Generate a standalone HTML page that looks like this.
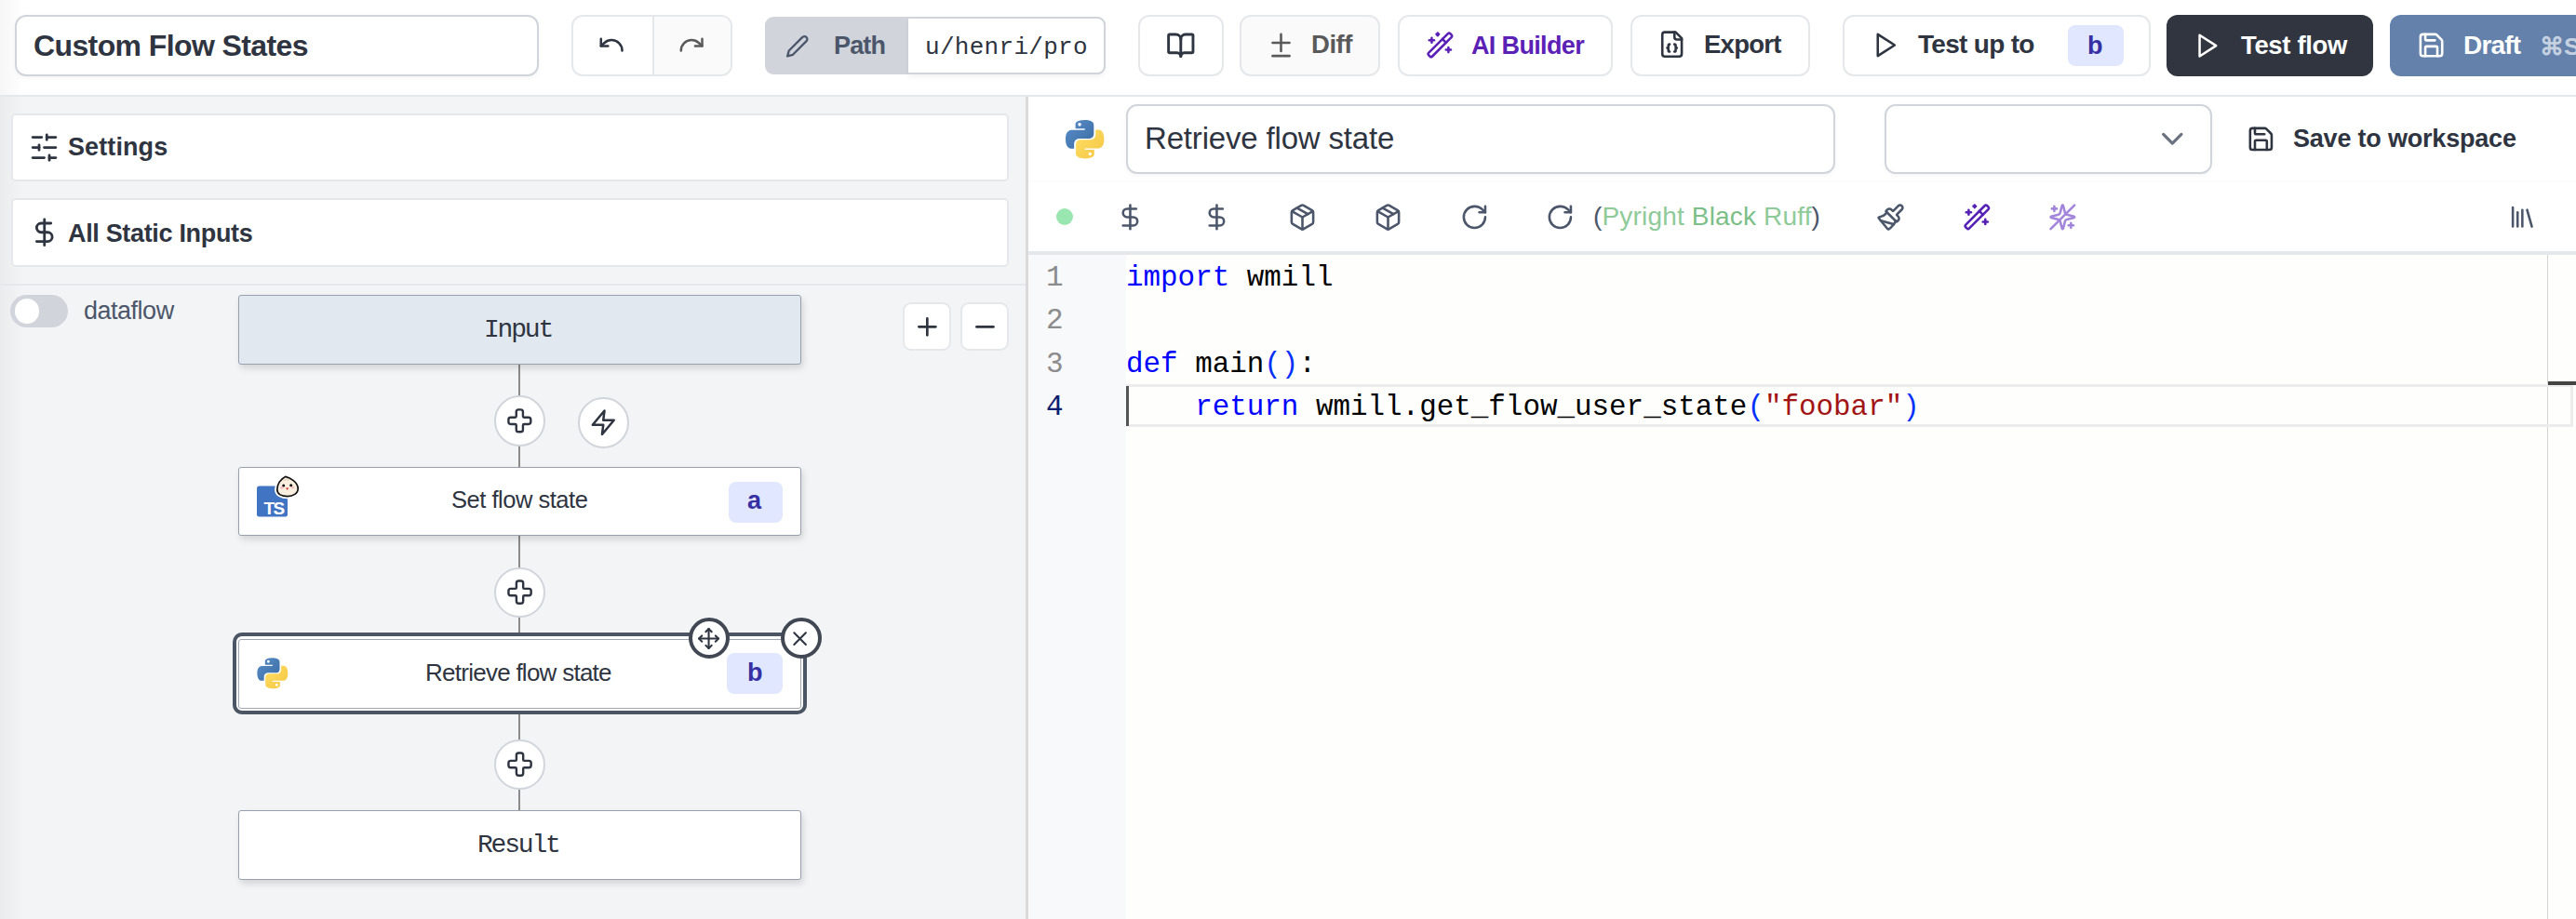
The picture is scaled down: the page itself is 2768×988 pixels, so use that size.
<!DOCTYPE html>
<html><head><meta charset="utf-8">
<style>
*{box-sizing:border-box;margin:0;padding:0}
html,body{width:2768px;height:988px;overflow:hidden;background:#fff;font-family:"Liberation Sans",sans-serif;color:#2e3440}
.a{position:absolute}
.t{position:absolute;white-space:nowrap;line-height:0}
.b{font-weight:bold}
.mono{font-family:"Liberation Mono",monospace}
svg.i{position:absolute;fill:none;stroke:currentColor;stroke-linecap:round;stroke-linejoin:round}
.btn{position:absolute;border:2px solid #e5e7eb;border-radius:12px;background:#fff}
</style></head><body>

<!-- ============ TOP BAR ============ -->
<div class="a" style="left:0;top:0;width:2768px;height:102px;background:#fff"></div>
<div class="a" style="left:0;top:0;width:26px;height:988px;background:linear-gradient(90deg,rgba(0,0,0,0.035),rgba(0,0,0,0))"></div>

<!-- title input -->
<div class="a" style="left:16px;top:16px;width:563px;height:66px;border:2px solid #d1d5db;border-radius:12px;background:#fff;box-shadow:0 2px 4px rgba(0,0,0,0.04)"></div>
<div class="t b" style="left:36px;top:49.20px;font-size:32px;letter-spacing:-0.61px">Custom Flow States</div>

<!-- undo/redo -->
<div class="btn" style="left:614px;top:16px;width:173px;height:66px;overflow:hidden">
  <div class="a" style="left:87px;top:0;width:86px;height:66px;background:#fafafa"></div>
  <div class="a" style="left:85px;top:0;width:2px;height:66px;background:#e5e7eb"></div>
</div>

<!-- path group -->
<div class="a" style="left:822px;top:18px;width:366px;height:62px;border-radius:9px;background:#d1d5db"></div>
<div class="a" style="left:976px;top:18px;width:212px;height:62px;border:2px solid #d1d5db;border-left:0;border-radius:0 9px 9px 0;background:#fff;box-shadow:0 3px 5px rgba(0,0,0,0.05)"></div>
<div class="t b" style="left:896px;top:48.84px;font-size:27px;color:#4c566a;letter-spacing:-0.84px">Path</div>
<div class="t mono" style="left:994px;top:51px;font-size:26px;color:#2e3440;letter-spacing:0.3px">u/henri/pro</div>

<!-- book -->
<div class="btn" style="left:1223px;top:16px;width:92px;height:66px"></div>
<!-- diff -->
<div class="btn" style="left:1332px;top:16px;width:151px;height:66px;background:#fafafa"></div>
<div class="t b" style="left:1409px;top:48.06px;font-size:27.5px;color:#5a5a5a;letter-spacing:-0.46px">Diff</div>
<!-- AI builder -->
<div class="btn" style="left:1502px;top:16px;width:231px;height:66px"></div>
<div class="t b" style="left:1581px;top:48.64px;font-size:27px;color:#5b21b6;letter-spacing:-0.65px">AI Builder</div>
<!-- export -->
<div class="btn" style="left:1752px;top:16px;width:193px;height:66px"></div>
<div class="t b" style="left:1831px;top:48.46px;font-size:27.5px;color:#2e3440;letter-spacing:-0.74px">Export</div>
<!-- test up to -->
<div class="btn" style="left:1980px;top:16px;width:331px;height:66px"></div>
<div class="t b" style="left:2061px;top:48.29px;font-size:28px;color:#2e3440;letter-spacing:-0.69px">Test up to</div>
<div class="a" style="left:2222px;top:27px;width:60px;height:44px;border-radius:8px;background:#e0e7ff"></div>
<div class="t b" style="left:2243px;top:49px;font-size:27px;color:#3730a3">b</div>
<!-- test flow -->
<div class="a" style="left:2328px;top:16px;width:222px;height:66px;border-radius:12px;background:#30353f"></div>
<div class="t b" style="left:2408px;top:49.46px;font-size:27.5px;color:#fff;letter-spacing:-0.35px">Test flow</div>
<!-- draft -->
<div class="a" style="left:2568px;top:16px;width:240px;height:66px;border-radius:12px;background:#6381aa"></div>
<div class="t b" style="left:2647px;top:49.49px;font-size:28px;color:#fff;letter-spacing:-0.84px">Draft</div>
<div class="t b" style="left:2729px;top:49.5px;font-size:26px;color:#c5d0e0">&#8984;S</div>

<!-- separator -->
<div class="a" style="left:0;top:102px;width:2768px;height:2px;background:#e5e7eb"></div>

<!-- ============ LEFT PANE ============ -->
<div class="a" style="left:0;top:104px;width:1102px;height:884px;background:#f3f4f6"></div>
<div class="a" style="left:0;top:104px;width:26px;height:884px;background:linear-gradient(90deg,rgba(0,0,0,0.035),rgba(0,0,0,0))"></div>
<div class="a" style="left:1102px;top:104px;width:3px;height:884px;background:#dadada"></div>


<!-- ===== TOP BAR ICONS ===== -->
<svg class="i" style="left:641.6px;top:33.1px;color:#2e3440" width="30.3" height="30.3" viewBox="0 0 24 24" stroke-width="2"><path d="M3 7v6h6"/><path d="M21 17a9 9 0 0 0-9-9 9 9 0 0 0-6 2.3L3 13"/></svg>
<svg class="i" style="left:728.2px;top:33.1px;color:#5a5a5a" width="30.3" height="30.3" viewBox="0 0 24 24" stroke-width="2"><path d="M21 7v6h-6"/><path d="M3 17a9 9 0 0 1 9-9 9 9 0 0 1 6 2.3l3 2.7"/></svg>
<svg class="i" style="left:843.7px;top:36.5px;color:#4c566a" width="25.5" height="25.5" viewBox="0 0 24 24" stroke-width="2.2"><path d="M17 3a2.85 2.83 0 1 1 4 4L7.5 20.5 2 22l1.5-5.5Z"/></svg>
<svg class="i" style="left:1252.5px;top:32.6px;color:#2e3440" width="31.6" height="31.6" viewBox="0 0 24 24" stroke-width="2.2"><path d="M12 7v14"/><path d="M3 18a1 1 0 0 1-1-1V4a1 1 0 0 1 1-1h5a4 4 0 0 1 4 4 4 4 0 0 1 4-4h5a1 1 0 0 1 1 1v13a1 1 0 0 1-1 1h-6a3 3 0 0 0-3 3 3 3 0 0 0-3-3z"/></svg>
<svg class="i" style="left:1361px;top:32.7px;color:#5a5a5a" width="31" height="31" viewBox="0 0 24 24" stroke-width="2"><path d="M12 3v14"/><path d="M5 10h14"/><path d="M5 21h14"/></svg>
<svg class="i" style="left:1531.8px;top:32.6px;color:#5b21b6" width="30.8" height="30.8" viewBox="0 0 24 24" stroke-width="2"><path d="m21.64 3.64-1.28-1.28a1.21 1.21 0 0 0-1.72 0L2.36 18.64a1.21 1.21 0 0 0 0 1.72l1.28 1.28a1.2 1.2 0 0 0 1.72 0L21.64 5.36a1.2 1.2 0 0 0 0-1.72"/><path d="m14 7 3 3"/><path d="M5 6v4"/><path d="M19 14v4"/><path d="M10 2v2"/><path d="M7 8H3"/><path d="M21 16h-4"/><path d="M11 3H9"/></svg>
<svg class="i" style="left:1781.4px;top:32.4px;color:#2e3440" width="31.3" height="31.3" viewBox="0 0 24 24" stroke-width="2"><path d="M15 2H6a2 2 0 0 0-2 2v16a2 2 0 0 0 2 2h12a2 2 0 0 0 2-2V7Z"/><path d="M14 2v4a2 2 0 0 0 2 2h4"/><path d="M10 12a1 1 0 0 0-1 1v1a1 1 0 0 1-1 1 1 1 0 0 1 1 1v1a1 1 0 0 0 1 1"/><path d="M14 18a1 1 0 0 0 1-1v-1a1 1 0 0 1 1-1 1 1 0 0 1-1-1v-1a1 1 0 0 0-1-1"/></svg>
<svg class="i" style="left:2009.6px;top:32.9px;color:#2e3440" width="31" height="31" viewBox="0 0 24 24" stroke-width="2" stroke-linejoin="miter" stroke-linecap="butt"><polygon points="6 3 20 12 6 21 6 3"/></svg>
<svg class="i" style="left:2355.9px;top:33.5px;color:#fff" width="30.3" height="30.3" viewBox="0 0 24 24" stroke-width="2" stroke-linejoin="miter" stroke-linecap="butt"><polygon points="6 3 20 12 6 21 6 3"/></svg>
<svg class="i" style="left:2596.6px;top:32.5px;color:#fff" width="31.1" height="31.1" viewBox="0 0 24 24" stroke-width="2"><path d="M15.2 3a2 2 0 0 1 1.4.6l3.8 3.8a2 2 0 0 1 .6 1.4V19a2 2 0 0 1-2 2H5a2 2 0 0 1-2-2V5a2 2 0 0 1 2-2z"/><path d="M17 21v-7a1 1 0 0 0-1-1H8a1 1 0 0 0-1 1v7"/><path d="M7 3v4a1 1 0 0 0 1 1h7"/></svg>

<!-- ===== LEFT PANE CONTENT ===== -->
<div class="a" style="left:12px;top:122px;width:1072px;height:73px;border:2px solid #e5e7eb;border-radius:5px;background:#fff"></div>
<svg class="i" style="left:31.2px;top:141.8px;color:#2e3440" width="33" height="33" viewBox="0 0 24 24" stroke-width="2"><line x1="21" x2="14" y1="4" y2="4"/><line x1="10" x2="3" y1="4" y2="4"/><line x1="21" x2="12" y1="12" y2="12"/><line x1="8" x2="3" y1="12" y2="12"/><line x1="21" x2="16" y1="20" y2="20"/><line x1="12" x2="3" y1="20" y2="20"/><line x1="14" x2="14" y1="2" y2="6"/><line x1="8" x2="8" y1="10" y2="14"/><line x1="16" x2="16" y1="18" y2="22"/></svg>
<div class="t b" style="left:73px;top:157.64px;font-size:27px;letter-spacing:0.1px">Settings</div>

<div class="a" style="left:12px;top:213px;width:1072px;height:74px;border:2px solid #e5e7eb;border-radius:5px;background:#fff"></div>
<svg class="i" style="left:31px;top:233px;color:#2e3440" width="33.5" height="33.5" viewBox="0 0 24 24" stroke-width="2"><line x1="12" x2="12" y1="2" y2="22"/><path d="M17 5H9.5a3.5 3.5 0 0 0 0 7h5a3.5 3.5 0 0 1 0 7H6"/></svg>
<div class="t b" style="left:73px;top:250.74px;font-size:27px;letter-spacing:-0.33px">All Static Inputs</div>

<div class="a" style="left:0;top:305px;width:1102px;height:2px;background:#e5e7eb"></div>

<!-- toggle -->
<div class="a" style="left:11px;top:317px;width:62px;height:35px;border-radius:18px;background:#d1d5db"></div>
<div class="a" style="left:15.5px;top:321px;width:26.5px;height:26.5px;border-radius:50%;background:#fff"></div>
<div class="t" style="left:90px;top:333.94px;font-size:27px;color:#4c566a;letter-spacing:-0.49px">dataflow</div>

<!-- zoom buttons -->
<div class="a" style="left:970px;top:325px;width:52px;height:52px;border:2px solid #e5e7eb;border-radius:9px;background:#fff"></div>
<div class="a" style="left:1032px;top:325px;width:52px;height:52px;border:2px solid #e5e7eb;border-radius:9px;background:#fff"></div>
<svg class="i" style="left:981.1px;top:335.9px;color:#2e3440" width="30.7" height="30.7" viewBox="0 0 24 24" stroke-width="2.1"><path d="M5 12h14"/><path d="M12 5v14"/></svg>
<svg class="i" style="left:1042.8px;top:335.8px;color:#2e3440" width="30.9" height="30.9" viewBox="0 0 24 24" stroke-width="2.1"><path d="M5 12h14"/></svg>

<!-- connectors -->
<div class="a" style="left:557px;top:391px;width:2px;height:112px;background:#8b8b8b"></div>
<div class="a" style="left:557px;top:575px;width:2px;height:112px;background:#8b8b8b"></div>
<div class="a" style="left:557px;top:761px;width:2px;height:111px;background:#8b8b8b"></div>

<!-- Input node -->
<div class="a" style="left:256px;top:317px;width:605px;height:75px;border:1.6px solid #98a0ad;border-radius:3px;background:#e2e8f0;box-shadow:2px 4px 7px rgba(0,0,0,0.13)"></div>
<div class="t mono" style="left:520px;top:355px;font-size:28px;letter-spacing:-2.2px">Input</div>

<!-- Set flow state node -->
<div class="a" style="left:256px;top:502px;width:605px;height:74px;border:1.6px solid #98a0ad;border-radius:3px;background:#fff;box-shadow:2px 4px 7px rgba(0,0,0,0.13)"></div>
<div class="t" style="left:485px;top:537.46px;font-size:25.5px;letter-spacing:-0.48px">Set flow state</div>
<div class="a" style="left:783px;top:518px;width:58px;height:44px;border-radius:8px;background:#e0e7ff"></div>
<div class="t b" style="left:803px;top:538px;font-size:27px;color:#3730a3">a</div>

<!-- Retrieve flow state node (selected) -->
<div class="a" style="left:249.5px;top:680px;width:617px;height:87.5px;border:4.5px solid #4b5563;border-radius:10px;background:#fff"></div>
<div class="a" style="left:256px;top:686.5px;width:605px;height:75px;border:1.6px solid #a0a7b3;border-radius:3px;background:#fff"></div>
<div class="t" style="left:457px;top:722.58px;font-size:26px;letter-spacing:-0.74px">Retrieve flow state</div>
<div class="a" style="left:781px;top:702px;width:60px;height:44px;border-radius:8px;background:#e0e7ff"></div>
<div class="t b" style="left:803px;top:723px;font-size:27px;color:#3730a3">b</div>

<!-- Result node -->
<div class="a" style="left:256px;top:871px;width:605px;height:75px;border:1.6px solid #98a0ad;border-radius:3px;background:#fff;box-shadow:2px 4px 7px rgba(0,0,0,0.13)"></div>
<div class="t mono" style="left:513px;top:909px;font-size:28px;letter-spacing:-2.2px">Result</div>

<!-- plus circles -->
<div class="a" style="left:531px;top:425px;width:54.5px;height:54.5px;border:2px solid #d1d5db;border-radius:50%;background:#fff"></div>
<div class="a" style="left:621px;top:427px;width:54.5px;height:54.5px;border:2px solid #d1d5db;border-radius:50%;background:#fff"></div>
<div class="a" style="left:531px;top:609.5px;width:54.5px;height:54.5px;border:2px solid #d1d5db;border-radius:50%;background:#fff"></div>
<div class="a" style="left:531px;top:794.5px;width:54.5px;height:54.5px;border:2px solid #d1d5db;border-radius:50%;background:#fff"></div>
<svg class="i" style="left:544.1px;top:437.5px;color:#2e3440" width="28.7" height="28.7" viewBox="0 0 24 24" stroke-width="2"><path d="M4 9a2 2 0 0 0-2 2v2a2 2 0 0 0 2 2h4a1 1 0 0 1 1 1v4a2 2 0 0 0 2 2h2a2 2 0 0 0 2-2v-4a1 1 0 0 1 1-1h4a2 2 0 0 0 2-2v-2a2 2 0 0 0-2-2h-4a1 1 0 0 1-1-1V4a2 2 0 0 0-2-2h-2a2 2 0 0 0-2 2v4a1 1 0 0 1-1 1z"/></svg>
<svg class="i" style="left:633.2px;top:438.8px;color:#2e3440" width="30.5" height="30.5" viewBox="0 0 24 24" stroke-width="2" stroke-linejoin="miter"><polygon points="13 2 3 14 12 14 11 22 21 10 12 10 13 2"/></svg>
<svg class="i" style="left:543.9px;top:622.2px;color:#2e3440" width="29.1" height="29.1" viewBox="0 0 24 24" stroke-width="2"><path d="M4 9a2 2 0 0 0-2 2v2a2 2 0 0 0 2 2h4a1 1 0 0 1 1 1v4a2 2 0 0 0 2 2h2a2 2 0 0 0 2-2v-4a1 1 0 0 1 1-1h4a2 2 0 0 0 2-2v-2a2 2 0 0 0-2-2h-4a1 1 0 0 1-1-1V4a2 2 0 0 0-2-2h-2a2 2 0 0 0-2 2v4a1 1 0 0 1-1 1z"/></svg>
<svg class="i" style="left:543.9px;top:806.7px;color:#2e3440" width="29.1" height="29.1" viewBox="0 0 24 24" stroke-width="2"><path d="M4 9a2 2 0 0 0-2 2v2a2 2 0 0 0 2 2h4a1 1 0 0 1 1 1v4a2 2 0 0 0 2 2h2a2 2 0 0 0 2-2v-4a1 1 0 0 1 1-1h4a2 2 0 0 0 2-2v-2a2 2 0 0 0-2-2h-4a1 1 0 0 1-1-1V4a2 2 0 0 0-2-2h-2a2 2 0 0 0-2 2v4a1 1 0 0 1-1 1z"/></svg>

<!-- move / close buttons -->
<div class="a" style="left:739.5px;top:664px;width:44px;height:44px;border:4px solid #414854;border-radius:50%;background:#fff"></div>
<div class="a" style="left:838.5px;top:664px;width:44px;height:44px;border:4px solid #414854;border-radius:50%;background:#fff"></div>
<svg class="i" style="left:748.5px;top:674.1px;color:#2e3440" width="25.1" height="25.1" viewBox="0 0 24 24" stroke-width="2"><polyline points="5 9 2 12 5 15"/><polyline points="9 5 12 2 15 5"/><polyline points="15 19 12 22 9 19"/><polyline points="19 9 22 12 19 15"/><line x1="2" x2="22" y1="12" y2="12"/><line x1="12" x2="12" y1="2" y2="22"/></svg>
<svg class="i" style="left:847.4px;top:674.1px;color:#2e3440" width="25.2" height="25.2" viewBox="0 0 24 24" stroke-width="2"><path d="M18 6 6 18"/><path d="m6 6 12 12"/></svg>


<!-- ===== RIGHT PANE ===== -->
<div class="a" style="left:1105px;top:194px;width:1663px;height:2px;background:#fcfcfd"></div>
<!-- python logo header -->
<svg class="a" style="left:1142px;top:126px" width="47.4" height="47.4" viewBox="0 0 32 32">
 <defs>
  <linearGradient id="pyb" x1="0" y1="0" x2="1" y2="1"><stop offset="0" stop-color="#5a8fcb"/><stop offset="1" stop-color="#3a6aa0"/></linearGradient>
  <linearGradient id="pyy" x1="0" y1="0" x2="1" y2="1"><stop offset="0" stop-color="#ffe066"/><stop offset="1" stop-color="#f4c542"/></linearGradient>
 </defs>
 <path fill="url(#pyb)" d="M15.9 2c-7.1 0-6.7 3.1-6.7 3.1v3.2h6.8v1H6.5S2 8.8 2 15.9s3.9 6.9 3.9 6.9h2.3v-3.3s-.1-3.9 3.9-3.9h6.7s3.7.1 3.7-3.6V5.8S23.1 2 15.9 2zm-3.7 2.1a1.2 1.2 0 1 1 0 2.4 1.2 1.2 0 0 1 0-2.4z"/>
 <path fill="url(#pyy)" d="M16.1 30c7.1 0 6.7-3.1 6.7-3.1v-3.2H16v-1h9.5s4.5.5 4.5-6.6-3.9-6.9-3.9-6.9h-2.3v3.3s.1 3.9-3.9 3.9h-6.7s-3.7-.1-3.7 3.6v6.2S8.9 30 16.1 30zm3.7-2.1a1.2 1.2 0 1 1 0-2.4 1.2 1.2 0 0 1 0 2.4z"/>
</svg>
<div class="a" style="left:1210px;top:112px;width:762px;height:75px;border:2px solid #d1d5db;border-radius:12px;background:#fff;box-shadow:0 2px 4px rgba(0,0,0,0.04)"></div>
<div class="t" style="left:1230px;top:148.76px;font-size:33px;letter-spacing:-0.17px">Retrieve flow state</div>
<div class="a" style="left:2025px;top:112px;width:352px;height:75px;border:2px solid #d1d5db;border-radius:12px;background:#fff;box-shadow:0 2px 4px rgba(0,0,0,0.04)"></div>
<svg class="i" style="left:2314.7px;top:129.6px;color:#6b7280" width="38.6" height="38.6" viewBox="0 0 24 24" stroke-width="2"><path d="m6 9 6 6 6-6"/></svg>
<svg class="i" style="left:2413.8px;top:133.9px;color:#2e3440" width="30.8" height="30.8" viewBox="0 0 24 24" stroke-width="2"><path d="M15.2 3a2 2 0 0 1 1.4.6l3.8 3.8a2 2 0 0 1 .6 1.4V19a2 2 0 0 1-2 2H5a2 2 0 0 1-2-2V5a2 2 0 0 1 2-2z"/><path d="M17 21v-7a1 1 0 0 0-1-1H8a1 1 0 0 0-1 1v7"/><path d="M7 3v4a1 1 0 0 0 1 1h7"/></svg>
<div class="t b" style="left:2464px;top:149.44px;font-size:27px;letter-spacing:-0.2px">Save to workspace</div>

<!-- toolbar -->
<div class="a" style="left:1135px;top:224px;width:18px;height:18px;border-radius:50%;background:#9ae6b0"></div>
<svg class="i" style="left:1198.5px;top:217.9px;color:#4c566a" width="30.9" height="30.9" viewBox="0 0 24 24" stroke-width="2"><line x1="12" x2="12" y1="2" y2="22"/><path d="M17 5H9.5a3.5 3.5 0 0 0 0 7h5a3.5 3.5 0 0 1 0 7H6"/></svg>
<svg class="i" style="left:1291.7px;top:217.9px;color:#4c566a" width="30.9" height="30.9" viewBox="0 0 24 24" stroke-width="2"><line x1="12" x2="12" y1="2" y2="22"/><path d="M17 5H9.5a3.5 3.5 0 0 0 0 7h5a3.5 3.5 0 0 1 0 7H6"/></svg>
<svg class="i" style="left:1383.7px;top:218.1px;color:#4c566a" width="31" height="31" viewBox="0 0 24 24" stroke-width="2"><path d="m7.5 4.27 9 5.15"/><path d="M21 8a2 2 0 0 0-1-1.73l-7-4a2 2 0 0 0-2 0l-7 4A2 2 0 0 0 3 8v8a2 2 0 0 0 1 1.73l7 4a2 2 0 0 0 2 0l7-4A2 2 0 0 0 21 16Z"/><path d="m3.3 7 8.7 5 8.7-5"/><path d="M12 22V12"/></svg>
<svg class="i" style="left:1475.9px;top:218px;color:#4c566a" width="31" height="31" viewBox="0 0 24 24" stroke-width="2"><path d="m7.5 4.27 9 5.15"/><path d="M21 8a2 2 0 0 0-1-1.73l-7-4a2 2 0 0 0-2 0l-7 4A2 2 0 0 0 3 8v8a2 2 0 0 0 1 1.73l7 4a2 2 0 0 0 2 0l7-4A2 2 0 0 0 21 16Z"/><path d="m3.3 7 8.7 5 8.7-5"/><path d="M12 22V12"/></svg>
<svg class="i" style="left:1569.1px;top:217.8px;color:#4c566a" width="30.8" height="30.8" viewBox="0 0 24 24" stroke-width="2"><path d="M21 12a9 9 0 1 1-9-9c2.52 0 4.93 1 6.74 2.74L21 8"/><path d="M21 3v5h-5"/></svg>
<svg class="i" style="left:1661px;top:217.8px;color:#4c566a" width="30.8" height="30.8" viewBox="0 0 24 24" stroke-width="2"><path d="M21 12a9 9 0 1 1-9-9c2.52 0 4.93 1 6.74 2.74L21 8"/><path d="M21 3v5h-5"/></svg>
<div class="t" style="left:1712px;top:232.5px;font-size:28px;color:#4c566a;letter-spacing:0.17px">(<span style="color:#8fca99">Pyright </span><span style="color:#7cbf88">Black</span><span style="color:#8fca99"> Ruff</span>)</div>
<svg class="i" style="left:2015.9px;top:217.8px;color:#4c566a" width="31" height="31" viewBox="0 0 24 24" stroke-width="2"><path d="m14.622 17.897-10.68-2.913"/><path d="M18.376 2.622a1 1 0 1 1 3.002 3.002L17.36 9.643a.5.5 0 0 0 0 .707l.944.944a2.41 2.41 0 0 1 0 3.408l-.944.944a.5.5 0 0 1-.707 0L8.354 7.348a.5.5 0 0 1 0-.707l.944-.944a2.41 2.41 0 0 1 3.408 0l.944.944a.5.5 0 0 0 .707 0z"/><path d="M9 8c-1.804 2.71-3.97 3.46-6.583 3.948a.507.507 0 0 0-.302.819l7.32 8.883a1 1 0 0 0 1.185.204C12.735 20.405 16 16.792 16 15"/></svg>
<svg class="i" style="left:2109.2px;top:217.8px;color:#5521b5" width="30.7" height="30.7" viewBox="0 0 24 24" stroke-width="2"><path d="m21.64 3.64-1.28-1.28a1.21 1.21 0 0 0-1.72 0L2.36 18.64a1.21 1.21 0 0 0 0 1.72l1.28 1.28a1.2 1.2 0 0 0 1.72 0L21.64 5.36a1.2 1.2 0 0 0 0-1.72"/><path d="m14 7 3 3"/><path d="M5 6v4"/><path d="M19 14v4"/><path d="M10 2v2"/><path d="M7 8H3"/><path d="M21 16h-4"/><path d="M11 3H9"/></svg>
<svg class="i" style="left:2200.8px;top:217.8px;color:#a385dc" width="30.7" height="30.7" viewBox="0 0 24 24" stroke-width="2"><path d="M9.937 15.5A2 2 0 0 0 8.5 14.063l-6.135-1.582a.5.5 0 0 1 0-.962L8.5 9.936A2 2 0 0 0 9.937 8.5l1.582-6.135a.5.5 0 0 1 .963 0L14.063 8.5A2 2 0 0 0 15.5 9.937l6.135 1.581a.5.5 0 0 1 0 .964L15.5 14.063a2 2 0 0 0-1.437 1.437l-1.582 6.135a.5.5 0 0 1-.963 0z"/><path d="M5 3v4"/><path d="M3 5h4"/><path d="M19 17v4"/><path d="M17 19h4"/><path d="M2 22 22 2"/></svg>
<svg class="i" style="left:2695px;top:218px;color:#4c566a" width="30.7" height="30.7" viewBox="0 0 24 24" stroke-width="2"><path d="m16 6 4 14"/><path d="M12 6v14"/><path d="M8 8v12"/><path d="M4 4v16"/></svg>

<!-- editor -->
<div class="a" style="left:1105px;top:270px;width:1663px;height:4px;background:#e5e7eb"></div>
<div class="a" style="left:1105px;top:274px;width:105px;height:714px;background:#f8f9fb"></div>
<div class="a" style="left:1210px;top:274px;width:1558px;height:714px;background:#fefefd"></div>
<div class="a" style="left:2737px;top:274px;width:1px;height:714px;background:#d4d4d4"></div>
<div class="a" style="left:1210px;top:413px;width:1555px;height:46px;border:3px solid #ececec;border-right-width:3px"></div>
<div class="a" style="left:1210px;top:415px;width:2.5px;height:43px;background:#555"></div>
<div class="a" style="left:2738px;top:410px;width:30px;height:4px;background:#444"></div>

<div class="mono" style="position:absolute;left:1124px;top:276px;font-size:31px;line-height:46.3px;color:#8c8c8c">
 <div style="position:absolute;top:0px">1</div>
 <div style="position:absolute;top:46.3px">2</div>
 <div style="position:absolute;top:92.6px">3</div>
 <div style="position:absolute;top:138.9px;color:#0b216f">4</div>
</div>
<div class="mono" style="position:absolute;left:1210px;top:276px;font-size:30.9px;line-height:46.3px;color:#000;white-space:pre">
 <div style="position:absolute;top:0px"><span style="color:#0000ff">import</span> wmill</div>
 <div style="position:absolute;top:92.6px"><span style="color:#0000ff">def</span> main<span style="color:#0431fa">()</span>:</div>
 <div style="position:absolute;top:138.9px">    <span style="color:#0000ff">return</span> wmill.get_flow_user_state<span style="color:#0431fa">(</span><span style="color:#a31515">"foobar"</span><span style="color:#0431fa">)</span></div>
</div>

<!-- TS + bun icon -->
<svg class="a" style="left:276px;top:511px" width="46" height="46" viewBox="0 0 46 46">
 <rect x="0" y="11.4" width="33" height="33.2" rx="2.5" fill="#4274c4"/>
 <text x="7.5" y="42" font-family="Liberation Sans" font-weight="bold" font-size="19" fill="#fff" letter-spacing="-1.5">TS</text>
 <path d="M21.8 15.6C21.6 9.6 25.6 3.8 30.6 1.4C35.8 2.6 44 7.2 44.2 14C44.4 19.6 38.6 22.6 33 22.6C26.6 22.6 22 20 21.8 15.6Z" fill="#fff" stroke="#fff" stroke-width="5.5"/>
 <path d="M21.8 15.6C21.6 9.6 25.6 3.8 30.6 1.4C35.8 2.6 44 7.2 44.2 14C44.4 19.6 38.6 22.6 33 22.6C26.6 22.6 22 20 21.8 15.6Z" fill="#fbf0df" stroke="#111" stroke-width="1.7"/>
 <path d="M28 4.5c1.5.8 2.6.8 3.6-.2M31.5 4.3c1 .9 2.2 1 3.4.3" fill="none" stroke="#c9b9a0" stroke-width=".7"/>
 <circle cx="28.7" cy="11" r="1.5" fill="#111"/>
 <circle cx="36.7" cy="10.8" r="1.5" fill="#111"/>
 <ellipse cx="26.8" cy="13.4" rx="1.8" ry="1.1" fill="#f6b6c2"/>
 <ellipse cx="38.4" cy="13.2" rx="1.8" ry="1.1" fill="#f6b6c2"/>
 <path d="M31 13.4h3.2l-1.6 2.4z" fill="#d11"/>
</svg>
<!-- python node icon -->
<svg class="a" style="left:273.6px;top:705px" width="37.7" height="37.7" viewBox="0 0 32 32">
 <path fill="url(#pyb)" d="M15.9 2c-7.1 0-6.7 3.1-6.7 3.1v3.2h6.8v1H6.5S2 8.8 2 15.9s3.9 6.9 3.9 6.9h2.3v-3.3s-.1-3.9 3.9-3.9h6.7s3.7.1 3.7-3.6V5.8S23.1 2 15.9 2zm-3.7 2.1a1.2 1.2 0 1 1 0 2.4 1.2 1.2 0 0 1 0-2.4z"/>
 <path fill="url(#pyy)" d="M16.1 30c7.1 0 6.7-3.1 6.7-3.1v-3.2H16v-1h9.5s4.5.5 4.5-6.6-3.9-6.9-3.9-6.9h-2.3v3.3s.1 3.9-3.9 3.9h-6.7s-3.7-.1-3.7 3.6v6.2S8.9 30 16.1 30zm3.7-2.1a1.2 1.2 0 1 1 0-2.4 1.2 1.2 0 0 1 0 2.4z"/>
</svg>
</body></html>
